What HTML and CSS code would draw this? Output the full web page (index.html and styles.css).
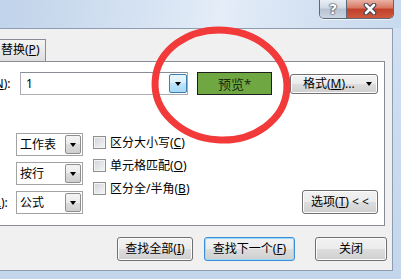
FILE: index.html
```html
<!DOCTYPE html>
<html lang="zh-CN">
<head>
    <meta charset="UTF-8">
    <title>查找和替换</title>
    <link rel="stylesheet" href="styles.css">
</head>
<body>
    <div class="window">
        <div class="titlebar">
            <div class="caption">
                <span class="cap-btn help">?</span>
                <span class="cap-btn close">
                    <svg width="14" height="12" viewBox="0 0 14 12">
                        <path d="M3 2 L11 10 M11 2 L3 10" stroke="#3a4453" stroke-width="4.6" stroke-linecap="round"/>
                        <path d="M3 2 L11 10 M11 2 L3 10" stroke="#fff" stroke-width="2.6" stroke-linecap="round"/>
                    </svg>
                </span>
            </div>
        </div>

        <div class="client">
            <!-- tab strip, first tab sits off the left edge -->
            <div class="tabs">
                <div class="tab selected">查找(<u>D</u>)</div>
                <div class="tab">替换(<u>P</u>)</div>
            </div>

            <div class="panel">
                <div class="find-row">
                    <label class="lbl lbl-wide">查找内容(<u>N</u>):</label>
                    <div class="input">
                        <span class="value">1</span>
                        <span class="drop hot"><i class="arrow"></i></span>
                    </div>
                    <div class="preview">预览*</div>
                    <button class="btn btn-format"><span>格式(<u>M</u>)...</span><i class="arrow"></i></button>
                </div>

                <div class="options">
                    <div class="fields">
                        <div class="field">
                            <label class="lbl">范围(<u>H</u>):</label>
                            <div class="combo"><span class="value">工作表</span><span class="drop"><i class="arrow"></i></span></div>
                        </div>
                        <div class="field">
                            <label class="lbl">搜索(<u>S</u>):</label>
                            <div class="combo"><span class="value">按行</span><span class="drop"><i class="arrow"></i></span></div>
                        </div>
                        <div class="field">
                            <label class="lbl">查找范围(<u>L</u>):</label>
                            <div class="combo"><span class="value">公式</span><span class="drop"><i class="arrow"></i></span></div>
                        </div>
                    </div>

                    <div class="checks">
                        <label class="check"><span class="box"></span><span>区分大小写(<u>C</u>)</span></label>
                        <label class="check"><span class="box"></span><span>单元格匹配(<u>O</u>)</span></label>
                        <label class="check"><span class="box"></span><span>区分全/半角(<u>B</u>)</span></label>
                    </div>

                    <button class="btn btn-options">选项(<u>T</u>) &lt; &lt;</button>
                </div>
            </div>

            <div class="actions">
                <button class="btn btn-all">查找全部(<u>I</u>)</button>
                <button class="btn btn-next default">查找下一个(<u>F</u>)</button>
                <button class="btn btn-close">关闭</button>
            </div>
        </div>

        <!-- red marker circle drawn over the dialog -->
        <svg class="ink" width="401" height="279" viewBox="0 0 401 279">
            <ellipse cx="221" cy="85" rx="66" ry="55" transform="rotate(4 221 85)" fill="none" stroke="#f23a3a" stroke-width="7"/>
        </svg>
    </div>
</body>
</html>
```

FILE: styles.css
```css
* {
    box-sizing: border-box;
}
body {
    margin: 0;
    font-family: "Noto Sans", "Noto Sans CJK SC", sans-serif;
    font-size: 12px;
    line-height: 16px;
    color: #000;
    overflow: hidden;
}
u {
    text-decoration: underline;
    text-underline-offset: 1px;
}
.window {
    position: relative;
    width: 401px;
    height: 279px;
    overflow: hidden;
    display: flex;
    flex-direction: column;
    background: linear-gradient(180deg, #d2e1f2 0%, #c3d6ec 100%);
}

/* title bar */
.titlebar {
    height: 28px;
    flex: none;
    display: flex;
    justify-content: flex-end;
    align-items: flex-start;
    padding-right: 7px;
    background: linear-gradient(100deg, #c0d3ea 0%, #d5e2f2 35%, #e4edf8 55%, #d2e0f1 80%, #c8daee 100%);
}
.caption {
    display: flex;
    border: 1px solid #5b6878;
    border-top: none;
    border-radius: 0 0 5px 5px;
    overflow: hidden;
    box-shadow: 0 1px 0 rgba(255, 255, 255, 0.7);
}
.cap-btn {
    height: 18px;
    display: flex;
    align-items: center;
    justify-content: center;
}
.help {
    width: 27px;
    border-right: 1px solid #5b6878;
    background: linear-gradient(180deg, #e9eef4 0%, #d0d9e4 45%, #b7c3d2 50%, #cad5e2 100%);
    color: #fff;
    font: bold 14px "DejaVu Sans", sans-serif;
    text-shadow: 0 0 1px #2f3a48, 0 0 1px #2f3a48, 0 0 2px #2f3a48;
}
.close {
    width: 46px;
    background: linear-gradient(180deg, #eab2a5 0%, #d87560 45%, #c0402a 50%, #d0593d 100%);
}

/* dialog client area */
.client {
    margin-left: -70px;
    width: 463px;
    height: 243px;
    flex: none;
    display: flex;
    flex-direction: column;
    background: #f0f0f0;
    border: 1px solid #8f9db1;
    border-left: none;
}
.tabs {
    height: 32px;
    flex: none;
    display: flex;
    align-items: flex-end;
    padding-left: 6px;
}
.tab {
    width: 55px;
    height: 22px;
    padding-left: 9px;
    line-height: 20px;
    white-space: nowrap;
    border: 1px solid #898c95;
    border-bottom: none;
    background: linear-gradient(180deg, #f4f4f4 0%, #e9e9e9 50%, #dedede 100%);
}
.tab.selected {
    height: 24px;
    background: #fff;
}
.panel {
    height: 165px;
    flex: none;
    margin: 0 7px 0 6px;
    padding: 10px 6px 0 6px;
    border: 1px solid #898c95;
    background: #fff;
}

.find-row {
    display: flex;
    align-items: center;
    height: 23px;
}
.lbl {
    width: 73px;
    flex: none;
    white-space: nowrap;
}
.lbl-wide {
    width: 77px;
}
.input {
    width: 168px;
    height: 23px;
    display: flex;
    align-items: stretch;
    padding: 1px 0 1px 1px;
    border: 1px solid #abadb3;
    border-top-color: #8a8d94;
    background: #fff;
}
.value {
    flex: 1;
    padding-left: 4px;
    line-height: 19px;
    white-space: nowrap;
}
.drop {
    width: 18px;
    display: flex;
    align-items: center;
    justify-content: center;
    border: 1px solid #8e8f8f;
    border-radius: 2px;
    background: linear-gradient(180deg, #f4f4f4 0%, #ebebeb 50%, #dddddd 50%, #cfcfcf 100%);
}
.drop.hot {
    border-color: #3c7fb1;
    background: linear-gradient(180deg, #eaf6fd 0%, #d9f0fc 50%, #bee6fd 50%, #a7d9f5 100%);
}
.arrow {
    width: 0;
    height: 0;
    border-left: 3.5px solid transparent;
    border-right: 3.5px solid transparent;
    border-top: 4px solid #000;
}
.preview {
    margin-left: 9px;
    width: 75px;
    height: 23px;
    flex: none;
    display: flex;
    align-items: center;
    justify-content: center;
    font-size: 13px;
    color: #1d2b12;
    background: #6fa843;
    border: 1px solid #1e1e1e;
}

/* buttons */
.btn {
    font: inherit;
    color: #000;
    padding: 0;
    border: 1px solid #707070;
    border-radius: 3px;
    background: linear-gradient(180deg, #f2f2f2 0%, #ebebeb 50%, #dddddd 50%, #cfcfcf 100%);
    box-shadow: inset 0 0 0 1px #fcfcfc;
    white-space: nowrap;
}
.btn-format {
    margin-left: 18px;
    width: 88px;
    height: 20px;
    flex: none;
    display: flex;
    align-items: center;
    justify-content: space-between;
    padding: 0 5px 0 12px;
}

.options {
    display: flex;
    margin-top: 38px;
}
.fields {
    display: flex;
    flex-direction: column;
    gap: 6px;
}
.field {
    display: flex;
    align-items: center;
}
.combo {
    width: 67px;
    height: 23px;
    display: flex;
    align-items: stretch;
    padding: 1px;
    border: 1px solid #a3a3a3;
    background: #fff;
}
.combo .value {
    padding-left: 2px;
}
.combo .drop {
    width: 16px;
}
.checks {
    margin-left: 10px;
    padding-top: 3px;
    display: flex;
    flex-direction: column;
    gap: 10px;
}
.check {
    display: flex;
    align-items: center;
    gap: 4px;
    height: 13px;
    white-space: nowrap;
}
.box {
    width: 13px;
    height: 13px;
    flex: none;
    border: 1px solid #8e8f8f;
    background: linear-gradient(135deg, #d0d3d8 0%, #f6f6f6 100%);
    box-shadow: inset 0 0 0 1px #f4f4f4;
}
.btn-options {
    margin-left: auto;
    align-self: flex-end;
    width: 76px;
    height: 24px;
}

.actions {
    display: flex;
    justify-content: flex-end;
    gap: 11px;
    margin-top: 11px;
    padding-right: 5px;
}
.actions .btn {
    height: 24px;
}
.btn-all { width: 76px; }
.btn-next { width: 91px; }
.btn-close {
    width: 72px;
    margin-left: 9px;
}
.default {
    border-color: #3c8fd6;
    box-shadow: inset 0 0 0 1px #9bdaf6;
}

/* annotation overlay */
.ink {
    position: absolute;
    left: 0;
    top: 0;
    pointer-events: none;
}
```
